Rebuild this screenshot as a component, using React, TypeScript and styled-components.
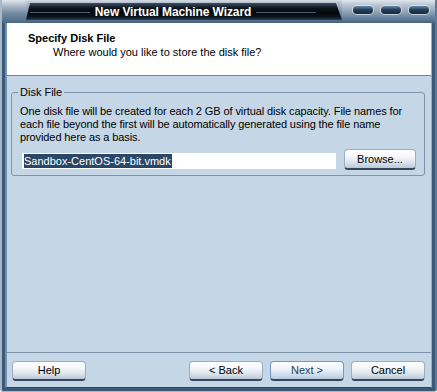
import styled, { createGlobalStyle } from 'styled-components';

const GlobalStyle = createGlobalStyle`
  html, body {
    margin: 0;
    padding: 0;
    background: #ffffff;
  }
  body {
    font-family: "Liberation Sans", Arial, sans-serif;
    font-size: 11px;
    color: #000;
  }
`;

const buttons = [
  { label: '< Back', primary: false },
  { label: 'Next >', primary: true },
  { label: 'Cancel', primary: false },
];

function App() {
  return (
    <>
      <GlobalStyle />
      <Window>
        <TitleBar>
          <TitleCap />
          <TitleBand>
            <TitleLine />
            <TitleText>New Virtual Machine Wizard</TitleText>
            <TitleLine />
          </TitleBand>
          <TitleControls>
            <Pill />
            <Pill />
            <Pill />
          </TitleControls>
        </TitleBar>
        <Frame>
          <Header>
            <HeaderTitle>Specify Disk File</HeaderTitle>
            <HeaderSub>Where would you like to store the disk file?</HeaderSub>
          </Header>
          <Rule />
          <Content>
            <GroupBox>
              <Legend>Disk File</Legend>
              <Description>
                One disk file will be created for each 2 GB of virtual disk capacity. File names for
                <br />
                each file beyond the first will be automatically generated using the file name
                <br />
                provided here as a basis.
              </Description>
              <FileRow>
                <FileInput>
                  <Selected>Sandbox-CentOS-64-bit.vmdk</Selected>
                </FileInput>
                <Button $width={72} $height={21}>Browse...</Button>
              </FileRow>
            </GroupBox>
          </Content>
          <FooterRule />
          <Footer>
            <Button>Help</Button>
            <ButtonGroup>
              {buttons.map((b) => (
                <Button key={b.label} $primary={b.primary}>{b.label}</Button>
              ))}
            </ButtonGroup>
          </Footer>
        </Frame>
      </Window>
    </>
  );
}

export default App;

const Window = styled.div`
  width: 437px;
  height: 392px;
  box-sizing: border-box;
  display: flex;
  flex-direction: column;
  background: #3a5878;
  border-left: 2px solid #a7b8c9;
  border-right: 2px solid #5d7a96;
  border-bottom: 1px solid #a9bacb;
  border-bottom-left-radius: 3px;
  border-bottom-right-radius: 3px;
  overflow: hidden;
`;

const TitleBar = styled.div`
  height: 23px;
  flex: 0 0 23px;
  margin: 0 -2px;
  display: flex;
  background: linear-gradient(
    to bottom,
    #d3dbe3 0px,
    #b3c1ce 3px,
    #7f97ad 11px,
    #5a7690 18px,
    #46637f 23px
  );
`;

const TitleCap = styled.div`
  width: 26px;
  flex: 0 0 26px;
  background: linear-gradient(
    to bottom,
    #dfe5eb 0px,
    #a9b9c8 6px,
    #6f889f 14px,
    #4d6a86 23px
  );
`;

const TitleBand = styled.div`
  flex: 0 0 316px;
  margin: 3px 0 3px;
  padding: 0 26px 0 4px;
  box-sizing: border-box;
  display: flex;
  align-items: center;
  gap: 5px;
  background: linear-gradient(
    to bottom,
    #3e5064 0px,
    #0d141c 5px,
    #03070b 10px,
    #0a1520 14px,
    #2a3f55 17px
  );
  clip-path: polygon(4px 0, calc(100% - 6px) 0, 100% 100%, 0 100%);
`;

const TitleLine = styled.div`
  flex: 1;
  height: 1px;
  margin-top: 1px;
  background: rgba(140, 160, 182, 0.55);
`;

const TitleText = styled.span`
  color: #ffffff;
  font-weight: bold;
  font-size: 12px;
  letter-spacing: -0.1px;
  white-space: nowrap;
`;

const TitleControls = styled.div`
  flex: 1;
  display: flex;
  gap: 8px;
  padding: 6px 0 0 11px;
  background: linear-gradient(
    to bottom,
    #e0e6ec 0px,
    #b9c6d2 5px,
    #8ea3b7 12px,
    #5f7b95 19px,
    #46637f 23px
  );
`;

const Pill = styled.div`
  width: 20px;
  height: 8px;
  border-radius: 4px;
  background: linear-gradient(to bottom, #6b88a4 0%, #27415c 45%, #142a42 100%);
  box-shadow: 0 0 0 1px rgba(230, 238, 245, 0.7);
`;

const Frame = styled.div`
  flex: 1;
  display: flex;
  flex-direction: column;
  margin: 0 3px 3px 3px;
  border-left: 2px solid #7590aa;
  border-right: 1px solid #98adc2;
  border-bottom: 1px solid #2d4660;
  min-height: 0;
`;

const Header = styled.div`
  height: 52px;
  flex: 0 0 52px;
  box-sizing: border-box;
  padding: 8px 0 0 21px;
  background: #ffffff;
  line-height: 14px;
`;

const HeaderTitle = styled.div`
  font-weight: bold;
  color: #000;
`;

const HeaderSub = styled.div`
  padding-left: 25px;
  color: #000;
`;

const Rule = styled.div`
  height: 1px;
  flex: 0 0 1px;
  background: #6f879e;
`;

const Content = styled.div`
  flex: 1;
  background: #c5d7e6;
  padding: 10px 6px 0 4px;
`;

const GroupBox = styled.fieldset`
  margin: 0;
  padding: 6px 8px 5px 8px;
  border: 1px solid #7e96ad;
  border-radius: 3px;
  min-width: 0;
`;

const Legend = styled.legend`
  padding: 0 2px;
  margin-left: -2px;
  line-height: 13px;
  color: #000;
`;

const Description = styled.div`
  line-height: 13px;
  letter-spacing: -0.1px;
  white-space: nowrap;
`;

const FileRow = styled.div`
  display: flex;
  align-items: flex-end;
  gap: 8px;
  margin-top: 5px;
`;

const FileInput = styled.div`
  flex: 1;
  height: 16px;
  margin: 0 0 1px 2px;
  padding: 0 2px;
  display: flex;
  align-items: center;
  background: #ffffff;
  box-shadow: inset 0 0 0 1px #ffffff;
`;

const Selected = styled.span`
  background: #2b4767;
  color: #ffffff;
  line-height: 14px;
  padding: 0 1px 0 0;
`;

const FooterRule = styled.div`
  height: 1px;
  flex: 0 0 1px;
  background: #7c93a8;
  box-shadow: 0 1px 0 #e4edf5;
`;

const Footer = styled.div`
  height: 34px;
  flex: 0 0 34px;
  box-sizing: border-box;
  padding: 8px 6px 0 5px;
  display: flex;
  justify-content: space-between;
  align-items: flex-start;
  background: #c5d7e6;
`;

const ButtonGroup = styled.div`
  display: flex;
  gap: 7px;
`;

const Button = styled.div<{ $primary?: boolean; $width?: number; $height?: number }>`
  width: ${({ $width }) => $width || 74}px;
  height: ${({ $height }) => $height || 20}px;
  box-sizing: border-box;
  display: flex;
  align-items: center;
  justify-content: center;
  padding-bottom: 1px;
  border: 1px solid ${({ $primary }) => ($primary ? '#6e9acb' : '#9badbf')};
  border-bottom: 2px solid #34475c;
  border-radius: 4px;
  background: ${({ $primary }) => ($primary
    ? 'linear-gradient(to bottom, #ffffff 0%, #eef4fa 40%, #cfdeec 75%, #b4c8dc 100%)'
    : 'linear-gradient(to bottom, #ffffff 0%, #f3f6f9 40%, #d6dfe8 75%, #b9c7d5 100%)')};
  color: ${({ $primary }) => ($primary ? '#1d3d64' : '#000')};
  font-size: 11px;
  cursor: default;
  user-select: none;
`;
